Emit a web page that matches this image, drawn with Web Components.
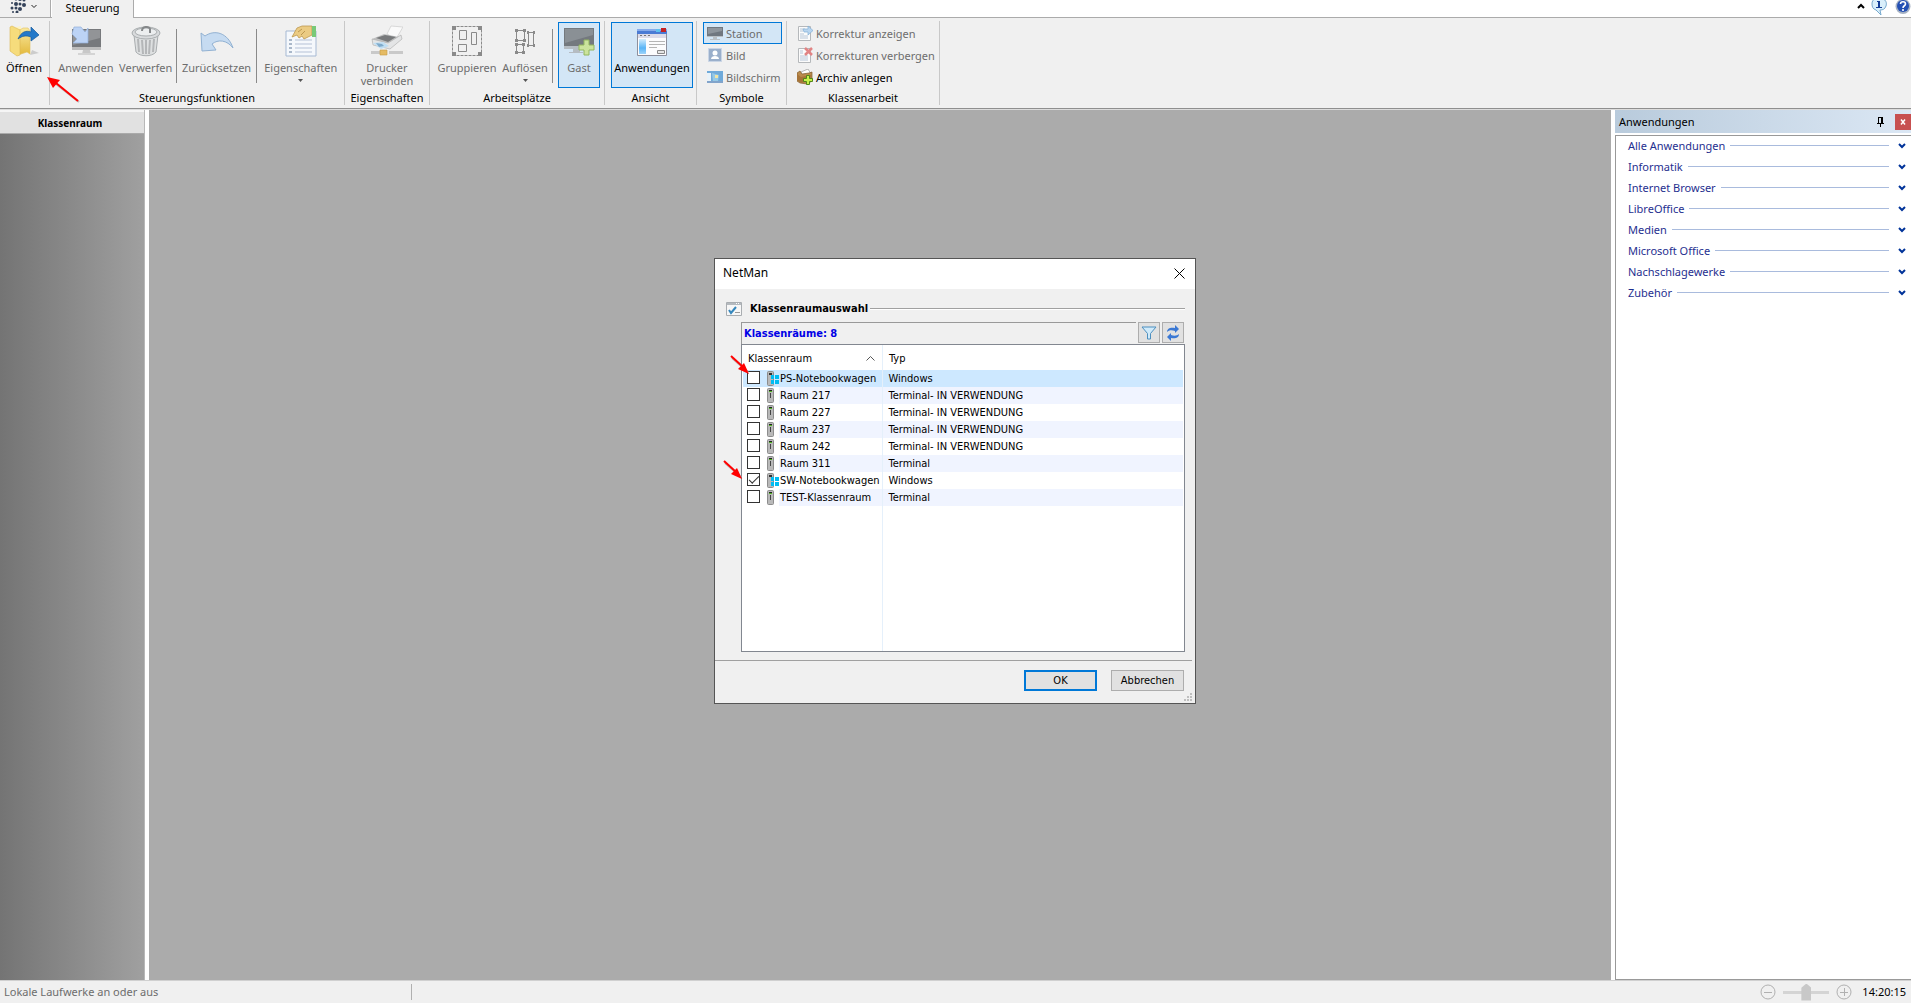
<!DOCTYPE html>
<html lang="de">
<head>
<meta charset="utf-8">
<title>NetMan</title>
<style>
html, body { height: 100%; }
body {
    margin: 0;
    overflow: hidden;
    font: 11px/16px "Noto Sans", "Open Sans", sans-serif;
    color: #000;
    background: #fff;
}
</style>
</head>
<body>
<netman-app></netman-app>

<script>
const icons = {
    grid: `<svg width="16" height="16" viewBox="0 0 16 16" fill="#34435a"><circle cx="6" cy="2" r="1.5"/><circle cx="10" cy="2" r="2"/><circle cx="14" cy="3" r="1.5"/><circle cx="2" cy="6" r="1"/><circle cx="6" cy="7" r="2"/><circle cx="10" cy="7" r="1.5"/><circle cx="14" cy="8" r="2"/><circle cx="2" cy="11" r="1.5"/><circle cx="6" cy="11" r="1.5"/><circle cx="10" cy="12" r="2"/><circle cx="3" cy="15" r="1"/><circle cx="7" cy="15" r="1.5"/></svg>`,
    open: `<svg width="32" height="32" viewBox="0 0 32 32"><defs><linearGradient id="f" x2="0" y2="1"><stop stop-color="#f9e9a0"/><stop offset="1" stop-color="#e3b93c"/></linearGradient></defs><path d="M22 30l9-2-7-3z" fill="#ccc"/><path d="M8 2l5-1v27l-5 1z" fill="#fdf3c4"/><path d="M10 6l5-3h5l2 3v23l-3-2-9 3z" fill="url(#f)" stroke="#e0bf5c" stroke-width=".6"/><path d="M2 2l2-1 8 4v25l-3 1-7-5z" fill="#f6dc7c" stroke="#dcb751" stroke-width=".6"/><path d="M10 14c3-7 8-9 13-7V2l8 8-8 6v-4c-5-2-9-1-13 2z" fill="#2479c9" stroke="#165a9b" stroke-width=".7"/></svg>`,
    apply: `<svg width="32" height="32" viewBox="0 0 32 32"><path d="M2 4h29v20H2z" fill="#77797c"/><path d="M3 5h27v8L3 20z" fill="#929497"/><path d="M2 22h29v3H2z" fill="#bcbcbc"/><path d="M13 25h7l1 4H12z" fill="#c8c8c8"/><path d="M8 28h17v2H8z" fill="#d4d4d4"/><path d="M4 2h7l4 5 3-4v15H3l4-4-5-5z" fill="#bcd3f5" stroke="#94b0da" stroke-width=".7"/></svg>`,
    trash: `<svg width="32" height="32" viewBox="0 0 32 32" stroke="#a9adaf"><path d="M4 10l2 17c4 5 16 5 20 0l2-17z" fill="#dee0e1"/><path d="M8 14l1 13M12 15l1 14M16 15v14M20 15l-1 14M24 14l-1 13" stroke="#b4b6b8" stroke-width="2"/><ellipse cx="16" cy="8" rx="14" ry="6" fill="#d9dbdd"/><ellipse cx="16" cy="7" rx="11" ry="4" fill="#eceeef"/><path d="M12 6c0-5 7-5 8-2v4" fill="none" stroke="#85888a" stroke-width="2"/></svg>`,
    undo: `<svg width="34" height="32" viewBox="0 0 34 32"><path d="M1 8l4 3c10-7 23-3 28 12-6-8-15-9-21-4l4 6-14 1z" fill="#c6dbf1" stroke="#91b1d2"/></svg>`,
    props: `<svg width="32" height="32" viewBox="0 0 32 32"><path d="M1 6h30v25H1z" fill="#f5f8fc" stroke="#a6b9d3"/><path d="M4 15h3M4 19h3M4 23h3M4 27h3" stroke="#5f7898"/><path d="M10 15h17M10 19h17M10 23h17M10 27h17" stroke="#b5c1d6"/><path d="M7 12l5-9 5-2h10v9l-8 4-2-3-3 2-2-3z" fill="#ebcb83" stroke="#bd9850" stroke-width=".8"/><path d="M13 7l4-3M16 10l4-4" stroke="#bd9850"/><path d="M27 1h4v11h-4z" fill="#78c979"/></svg>`,
    printer: `<svg width="32" height="32" viewBox="0 0 32 32"><path d="M16 9l4-8 12 1-7 12z" fill="#fafafa" stroke="#ccc" stroke-width=".7"/><path d="M1 14l12-5 15 3-10 8-16-3z" fill="#bfc0c1"/><path d="M5 13l9-3 11 2-8 5z" fill="#77797b"/><path d="M1 14l16 4 13-8 1 4-12 10-17-4z" fill="#e4e5e6" stroke="#aaa" stroke-width=".6"/><path d="M2 18l10-1 6 4-8 3z" fill="#bfdef3"/><path d="M5 18l6 1 2 2-5 1z" fill="#7faaca"/><path d="M0 26h9v3H0zM18 26h14v3H18z" fill="#c9c9c9"/><path d="M9 25h7v5H9z" fill="#e5bb64" stroke="#c79b45" stroke-width=".6"/></svg>`,
    group: `<svg width="32" height="32" viewBox="0 0 32 32" fill="none" stroke="#8a8a8a"><path d="M1.500 1.500h29v29h-29z" stroke-dasharray="3 1"/><path d="M8.500 5.500h7v9h-7zM20.500 7.500h5v12h-5zM7.500 19.500h8v7h-8z"/><path d="M1 1h4v4H1zM27 1h4v4h-4zM1 27h4v4H1zM27 27h4v4h-4z" fill="#8a8a8a" stroke="none"/></svg>`,
    ungroup: `<svg width="24" height="32" viewBox="0 0 24 32" fill="none" stroke="#8a8a8a"><path d="M3.500 5.500h8v10h-8zM15.500 7.500h5v13h-5zM3.500 19.500h7v8h-7z"/><g fill="#8a8a8a" stroke="none"><path d="M2 4h3v3H2zM10 4h3v3h-3zM2 14h3v3H2zM10 14h3v3h-3zM14 6h2v3h-2zM20 6h2v3h-2zM14 19h2v3h-2zM20 19h2v3h-2zM2 18h3v3H2zM9 18h3v3H9zM2 26h3v3H2zM9 26h3v3H9z"/></g></svg>`,
    guest: `<svg width="32" height="32" viewBox="0 0 32 32"><path d="M1 3h30v20H1z" fill="#74797e"/><path d="M2 4h28v6L2 18z" fill="#8a9095"/><path d="M1 21h30v3H1z" fill="#b5bcc2"/><path d="M10 24h7v4h-7zM6 27h14v1H6z" fill="#b5bcc2"/><path d="M21 15h5v5h5v5h-5v5h-5v-5h-5v-5h5z" fill="#cbe39c" stroke="#92b65f"/></svg>`,
    apps: `<svg width="32" height="32" viewBox="0 0 32 32"><defs><linearGradient id="p" x2="0" y2="1"><stop stop-color="#d3ecfc"/><stop offset=".6" stop-color="#58b4f6"/><stop offset="1" stop-color="#9ed4fa"/></linearGradient></defs><path d="M1.500 4.500h29v26h-29z" fill="#fcfcfd" stroke="#8d8f9c"/><path d="M1 4h30v5H1z" fill="#4b7bd4"/><path d="M1 4h30v2H1z" fill="#86abeb"/><path d="M20 4h4v3h-4z" fill="#5fc0ed"/><path d="M25 3h5v4h-5z" fill="#c42222"/><path d="M2 9h28v4H2z" fill="#dcdbe9"/><path d="M4 10h2v1H4zM8 10h2v1H8zM12 10h2v1h-2z" fill="#777"/><path d="M3 14h7v15H3z" fill="url(#p)"/><path d="M13 16.500h16M13 19.500h16M13 22.500h8" stroke="#b5b5b5"/><path d="M21.500 25.500h7v3h-7z" fill="#e5e5e5" stroke="#888"/></svg>`,
    station: `<svg width="16" height="16" viewBox="0 0 16 16"><path d="M0 2h16v10H0z" fill="#70777f"/><path d="M1 3h14v3L1 9z" fill="#8e959c"/><path d="M0 11h16v1H0zM6 12h4v2H6zM3 14h10v1H3z" fill="#bac0c5"/></svg>`,
    image: `<svg width="16" height="16" viewBox="0 0 16 16"><path d="M1.500 1.500h13v13h-13z" fill="#9aafcb" stroke="#c9d5e5"/><circle cx="8" cy="6" r="2.500" fill="#fff"/><path d="M4 12c0-4 8-4 8 0z" fill="#fff"/></svg>`,
    screen: `<svg width="16" height="16" viewBox="0 0 16 16"><path d="M0 2h16v12H0z" fill="#6faada"/><path d="M0 4h4v8H0z" fill="#e8f2f9"/><path d="M5 4l7 2-1 6-5 1z" fill="#96cae6"/><path d="M8 6h3v3H8z" fill="#f0e5a5"/><path d="M0 12h16v2H0z" fill="#82a4cb"/></svg>`,
    corrShow: `<svg width="16" height="16" viewBox="0 0 16 16"><path d="M1.500 1.500h12v14h-12z" fill="#fbfbfb" stroke="#b5b8bb"/><path d="M3 4h5M3 6h3M3 11h8M3 13h8M3 9h4" stroke="#b7c6d7"/><path d="M6 4h5V1l5 4.500L11 10V7H7z" fill="#b8d5ef" stroke="#82afd7" stroke-width=".7"/></svg>`,
    corrHide: `<svg width="16" height="16" viewBox="0 0 16 16"><path d="M1.500 1.500h12v14h-12z" fill="#fbfbfb" stroke="#b5b8bb"/><path d="M3 4h3M3 6h3M3 9h8M3 11h8M3 13h8" stroke="#b7c6d7"/><path d="M8 1l7 7M15 1L8 8" stroke="#e18484" stroke-width="2.500"/></svg>`,
    archive: `<svg width="16" height="16" viewBox="0 0 16 16"><path d="M4 3l7-3 3 5-9 4z" fill="#fff" stroke="#999" stroke-width=".7"/><path d="M0 4l3-2 2 3 7-1 3-1v9l-5 3-7-1-3-2z" fill="#b98a4d" stroke="#7f5b2d" stroke-width=".7"/><path d="M0 5l4 3 10-2-1 6-9 2-4-3z" fill="#a67439"/><path d="M9.500 6.500h3v3h3v3h-3v3h-3v-3h-3v-3h3z" fill="#c6f04b" stroke="#518719"/></svg>`,
    info: `<svg width="16" height="16" viewBox="0 0 16 16"><path d="M4 0h8c3 1 4 4 3 7-1 3-3 4-6 4l1 5-5-5C2 10 1 8 1 5c0-3 1-4 3-5z" fill="#d9effb" stroke="#77a9cd"/><path d="M6 2h3v6h2v1H5V8h2V3H6z" fill="#123c96"/></svg>`,
    help: `<svg width="16" height="16" viewBox="0 0 16 16"><circle cx="8" cy="7.500" r="7.500" fill="#a5b1c3"/><circle cx="8" cy="7" r="6" fill="#2450b4"/><path d="M5.500 5c0-3 5-3 5 0 0 2-2.500 1.500-2.500 4M8 10v2" fill="none" stroke="#fff" stroke-width="1.600"/></svg>`,
    caretUp: `<svg width="8" height="6" viewBox="0 0 8 6"><path d="M1 5l3-3 3 3" fill="none" stroke="#000" stroke-width="2"/></svg>`,
    caretDown: `<svg width="6" height="5" viewBox="0 0 6 5"><path d="M.5 1l2.500 2.500L5.500 1" fill="none" stroke="#222"/></svg>`,
    drop: `<svg width="5" height="3" viewBox="0 0 5 3"><path d="M0 0h5L2.500 3z" fill="#555"/></svg>`,
    chevron: `<svg width="8" height="6" viewBox="0 0 8 6"><path d="M1 1l3 3 3-3" fill="none" stroke="#003399" stroke-width="2"/></svg>`,
    pin: `<svg width="8" height="10" viewBox="0 0 8 10" fill="none" stroke="#000"><path d="M1 .5h5M1.500 0v6M5.500 0v6M4.500 0v6M0 6.500h7M3.500 7v3"/></svg>`,
    x: `<svg width="6" height="6" viewBox="0 0 6 6"><path d="M1 .5l4 5M5 .5l-4 5" stroke="#fff" stroke-width="1.500"/></svg>`,
    close: `<svg width="11" height="11" viewBox="0 0 11 11"><path d="M.5.5l10 10M10.500.5l-10 10" stroke="#000"/></svg>`,
    task: `<svg width="16" height="14" viewBox="0 0 16 14"><path d="M.5.5h15v13H.5z" fill="#f7f7f7" stroke="#a9adb1"/><path d="M1 1h14v2H1z" fill="#b5babf"/><path d="M10 1h1v1h-1zM12 1h1v1h-1z" fill="#fff"/><path d="M3 8l2 3 5-6" fill="none" stroke="#3788bd" stroke-width="2"/><path d="M9 10.500h5" stroke="#999"/></svg>`,
    filter: `<svg width="16" height="14" viewBox="0 0 16 14"><path d="M1 1h14L9.500 7.500V13h-3V7.500z" fill="#d0eafa" stroke="#4c8fbf"/></svg>`,
    refresh: `<svg width="14" height="16" viewBox="0 0 14 16"><path d="M1 7c0-4 4-5 8-4V0l4 4-4 4V6C6 5 3 5 1 7zM13 9c0 4-4 5-8 4v3l-4-4 4-4v2c3 1 6 1 8-1z" fill="#3a78d4"/></svg>`,
    sort: `<svg width="9" height="5" viewBox="0 0 9 5"><path d="M.5 4.500l4-4 4 4" fill="none" stroke="#555"/></svg>`,
    terminal: `<svg width="7" height="15" viewBox="0 0 7 15"><rect x=".5" y=".5" width="6" height="14" rx="1" fill="#b9b9b9" stroke="#8d8d8d"/><path d="M2 2h3v1H2z" fill="#222"/><path d="M2 3h3v1H2z" fill="#4eb41e"/><path d="M3 5h1v5H3z" fill="#444"/></svg>`,
    windows: `<svg width="12" height="15" viewBox="0 0 12 15"><rect x=".5" y=".5" width="6" height="14" rx="1" fill="#b9b9b9" stroke="#8d8d8d"/><path d="M2 2h3v2H2z" fill="#333"/><path d="M4 4h3v4H4zM8 4h4v4H8zM4 9h3v4H4zM8 9h4v4H8z" fill="#00bcf2"/></svg>`,
    arrow: `<svg width="34" height="27" viewBox="0 0 34 27"><path d="M9 7l23 18" stroke="#bbb" stroke-width="2"/><path d="M9 6l22 18" stroke="#f00" stroke-width="2"/><path d="M0 0l13 3-7 8z" fill="#f00"/></svg>`,
    arrowSmall: `<svg width="24" height="22" viewBox="0 0 24 22"><path d="M2 3l16 14" stroke="#bbb" stroke-width="2"/><path d="M1 1l12 11" stroke="#f00" stroke-width="2"/><path d="M19 19L8 14l6-6z" fill="#f00"/></svg>`,
    grip: `<svg width="8" height="8" viewBox="0 0 8 8" fill="#bfbfbf"><path d="M6 0h2v2H6zM3 3h2v2H3zM6 3h2v2H6zM0 6h2v2H0zM3 6h2v2H3zM6 6h2v2H6z"/></svg>`,
    minus: `<svg width="16" height="16" viewBox="0 0 16 16" fill="none" stroke="#b0b0b0"><circle cx="8" cy="8" r="7"/><path d="M4 8.500h8"/></svg>`,
    plus: `<svg width="16" height="16" viewBox="0 0 16 16" fill="none" stroke="#b0b0b0"><circle cx="8" cy="8" r="7"/><path d="M4 8.500h8M8.500 4v8"/></svg>`
};

const base = `
    * { box-sizing: border-box; }
    svg { display: block; flex: none; }
    button { font: inherit; color: inherit; background: none; border: 0; padding: 0; margin: 0; }
`;

class NetElement extends HTMLElement {
    constructor() {
        super();
        this.shadowDOM = this.attachShadow({mode: "open"});
    }

    connectedCallback() {
        this.render();
    }
}

class RibbonButton extends NetElement {
    render() {
        const drop = this.hasAttribute("drop") ? icons.drop : "";
        this.shadowDOM.innerHTML = `
        <style>
            ${base}
            :host { display: block; }
            button {
                display: flex;
                flex-direction: column;
                align-items: center;
                width: 100%;
                height: 66px;
                border: 1px solid transparent;
                white-space: nowrap;
                line-height: 13px;
            }
            .icon { height: 32px; margin: 2px 0 4px; }
            .text { text-align: center; }
            .text + svg { margin-top: 5px; }
            :host([muted]) button { color: #6d6d6d; }
            :host([active]) button { background: #d3e6f6; border-color: #0078d7; }
            :host([small]) button {
                flex-direction: row;
                height: 22px;
                padding: 0 3px;
                gap: 3px;
            }
            :host([small]) .icon { height: 16px; width: 16px; margin: 0; }
        </style>
        <button type="button"><span class="icon">${icons[this.getAttribute("icon")]}</span><span class="text"><slot></slot></span>${drop}</button>
        `;
    }
}
customElements.define("ribbon-button", RibbonButton);

class RibbonGroup extends NetElement {
    render() {
        this.shadowDOM.innerHTML = `
        <style>
            ${base}
            :host {
                display: flex;
                flex-direction: column;
                flex: none;
                height: 84px;
                margin-top: 3px;
                border-right: 1px solid #c8c8c8;
            }
            .items { display: flex; height: 67px; padding: 1px 3px 0; }
            :host([stack]) .items { flex-direction: column; padding: 1px 4px 0 6px; }
            .title { text-align: center; line-height: 20px; }
            ::slotted(hr) {
                width: 1px;
                height: 54px;
                margin: 7px 3px 0;
                border: 0;
                background: #8a8a8a;
            }
        </style>
        <div class="items"><slot></slot></div>
        <div class="title">${this.getAttribute("label") || ""}</div>
        `;
    }
}
customElements.define("ribbon-group", RibbonGroup);

class RibbonBar extends NetElement {
    render() {
        this.shadowDOM.innerHTML = `
        <style>
            ${base}
            :host { display: block; flex: none; position: relative; }
            .tabs { display: flex; height: 18px; border-bottom: 1px solid #ababab; }
            .menu {
                display: flex;
                align-items: flex-start;
                gap: 5px;
                width: 51px;
                padding: 0 0 0 10px;
                border-right: 1px solid #ababab;
                background: #f0f0f0;
                overflow: hidden;
            }
            .menu svg:first-child { margin-top: -3px; }
            .menu svg + svg { margin-top: 4px; }
            .tab {
                width: 82px;
                height: 18px;
                margin-left: 1px;
                line-height: 15px;
                background: #f0f0f0;
                border-right: 1px solid #ababab;
                padding-bottom: 3px;
            }
            .tools { display: flex; margin-left: auto; overflow: hidden; }
            .tools button { margin-top: -3px; }
            .tools button:first-child { margin: 3px 6px 0 0; align-self: flex-start; }
            .tools button + button + button { margin-left: 8px; }
            .groups { display: flex; height: 91px; background: #f0f0f0; border-bottom: 1px solid #8f8f8f; }
            .hint { position: absolute; left: 47px; top: 77px; }
            ribbon-group { width: var(--w); }
            ribbon-button { width: var(--w); }
            ribbon-group[stack] ribbon-button { width: auto; }
        </style>
        <div class="tabs">
            <button class="menu" type="button" aria-label="Menü">${icons.grid}${icons.caretDown}</button>
            <button class="tab" type="button">Steuerung</button>
            <div class="tools">
                <button type="button" aria-label="Minimieren">${icons.caretUp}</button>
                <button type="button" aria-label="Info">${icons.info}</button>
                <button type="button" aria-label="Hilfe">${icons.help}</button>
            </div>
        </div>
        <div class="groups">
            <ribbon-group style="--w: 50px">
                <ribbon-button icon="open" style="--w: 42px">Öffnen</ribbon-button>
            </ribbon-group>
            <ribbon-group label="Steuerungsfunktionen" style="--w: 295px">
                <ribbon-button muted icon="apply" style="--w: 66px">Anwenden</ribbon-button>
                <ribbon-button muted icon="trash" style="--w: 54px">Verwerfen</ribbon-button>
                <hr>
                <ribbon-button muted icon="undo" style="--w: 74px">Zurücksetzen</ribbon-button>
                <hr>
                <ribbon-button muted drop icon="props" style="--w: 81px">Eigenschaften</ribbon-button>
            </ribbon-group>
            <ribbon-group label="Eigenschaften" style="--w: 85px">
                <ribbon-button muted icon="printer" style="--w: 78px">Drucker<br>verbinden</ribbon-button>
            </ribbon-group>
            <ribbon-group label="Arbeitsplätze" style="--w: 175px">
                <ribbon-button muted icon="group" style="--w: 68px">Gruppieren</ribbon-button>
                <ribbon-button muted drop icon="ungroup" style="--w: 48px">Auflösen</ribbon-button>
                <hr>
                <ribbon-button muted active icon="guest" style="--w: 42px; margin-left: 2px">Gast</ribbon-button>
            </ribbon-group>
            <ribbon-group label="Ansicht" style="--w: 92px">
                <ribbon-button active icon="apps" style="--w: 82px; margin-left: 3px">Anwendungen</ribbon-button>
            </ribbon-group>
            <ribbon-group stack label="Symbole" style="--w: 90px">
                <ribbon-button small muted active icon="station">Station</ribbon-button>
                <ribbon-button small muted icon="image">Bild</ribbon-button>
                <ribbon-button small muted icon="screen">Bildschirm</ribbon-button>
            </ribbon-group>
            <ribbon-group stack label="Klassenarbeit" style="--w: 153px">
                <ribbon-button small muted icon="corrShow">Korrektur anzeigen</ribbon-button>
                <ribbon-button small muted icon="corrHide">Korrekturen verbergen</ribbon-button>
                <ribbon-button small icon="archive">Archiv anlegen</ribbon-button>
            </ribbon-group>
        </div>
        <div class="hint">${icons.arrow}</div>
        `;
    }
}
customElements.define("ribbon-bar", RibbonBar);

class RoomPanel extends NetElement {
    render() {
        this.shadowDOM.innerHTML = `
        <style>
            ${base}
            :host {
                display: flex;
                flex-direction: column;
                width: 145px;
                border-right: 1px solid #b8b8b8;
            }
            header {
                height: 24px;
                padding-right: 4px;
                border-top: 2px solid #f5f5f5;
                border-bottom: 1px solid #aaa;
                background: #e1e1e1;
                text-align: center;
                font-weight: bold;
                font-size: 10px;
                line-height: 22px;
            }
            .body { flex: 1; background: linear-gradient(90deg, #747474, #a0a0a0); }
        </style>
        <header>Klassenraum</header>
        <div class="body"></div>
        `;
    }
}
customElements.define("room-panel", RoomPanel);

class AppCategory extends NetElement {
    render() {
        this.shadowDOM.innerHTML = `
        <style>
            ${base}
            :host { display: block; }
            button {
                display: flex;
                align-items: center;
                width: 100%;
                height: 21px;
                padding: 0 5px 2px 12px;
                color: #1f2f8f;
            }
            i { flex: 1; height: 1px; margin: 0 9px 0 5px; background: #a9bbdd; }
        </style>
        <button type="button"><slot></slot><i></i>${icons.chevron}</button>
        `;
    }
}
customElements.define("app-category", AppCategory);

class AppPanel extends NetElement {
    set categories(items) {
        this._items = items;
    }

    render() {
        this.shadowDOM.innerHTML = `
        <style>
            ${base}
            :host { display: flex; flex-direction: column; width: 296px; }
            header {
                display: flex;
                align-items: center;
                height: 23px;
                padding-left: 4px;
                background: linear-gradient(90deg, #b9cbdc, #dbe7f4);
            }
            header span { flex: 1; }
            .close {
                display: grid;
                place-items: center;
                width: 16px;
                height: 16px;
                margin-left: 10px;
                background: #c75050;
            }
            .list {
                flex: 1;
                margin-top: 2px;
                border: 1px solid #999;
                border-right: 0;
            }
        </style>
        <header>
            <span>Anwendungen</span>
            <button type="button" aria-label="Anheften">${icons.pin}</button>
            <button class="close" type="button" aria-label="Schließen">${icons.x}</button>
        </header>
        <div class="list"></div>
        `;
        const list = this.shadowDOM.querySelector(".list");
        this._items.forEach(item => {
            const category = document.createElement("app-category");
            category.textContent = item;
            list.appendChild(category);
        });
    }
}
customElements.define("app-panel", AppPanel);

class StatusBar extends NetElement {
    render() {
        this.shadowDOM.innerHTML = `
        <style>
            ${base}
            :host {
                display: flex;
                align-items: center;
                flex: none;
                height: 23px;
                padding: 0 5px 0 4px;
                border-top: 1px solid #d0d0d0;
                background: #f0f0f0;
            }
            .text { width: 408px; line-height: 16px; color: #6d6d6d; border-right: 1px solid #b0b0b0; }
            .zoom { display: flex; align-items: center; gap: 7px; margin-left: auto; }
            input {
                appearance: none;
                width: 46px;
                height: 18px;
                margin: 0;
                background: linear-gradient(#d4d4d4, #d4d4d4) center / 100% 3px no-repeat;
            }
            input::-webkit-slider-thumb {
                appearance: none;
                width: 10px;
                height: 17px;
                background: #c8c8c8;
                clip-path: polygon(50% 0, 100% 25%, 100% 100%, 0 100%, 0 25%);
            }
            time { margin-left: 10px; }
        </style>
        <span class="text">Lokale Laufwerke an oder aus</span>
        <div class="zoom">
            <button type="button" aria-label="Verkleinern">${icons.minus}</button>
            <input type="range" aria-label="Zoom">
            <button type="button" aria-label="Vergrößern">${icons.plus}</button>
        </div>
        <time>14:20:15</time>
        `;
    }
}
customElements.define("status-bar", StatusBar);

class RoomTable extends NetElement {
    set rooms(items) {
        this._items = items;
    }

    render() {
        const rows = this._items.map((room, i) => `
            <tr class="${room.selected ? "selected" : ""}">
                <td><div class="cell">
                    <input type="checkbox" id="room${i}" ${room.checked ? "checked" : ""}>
                    <label for="room${i}"><span class="icon">${icons[room.type === "Windows" ? "windows" : "terminal"]}</span><span class="name">${room.name}</span></label>
                </div></td>
                <td class="type">${room.type}</td>
            </tr>`).join("");
        this.shadowDOM.innerHTML = `
        <style>
            ${base}
            :host {
                display: block;
                box-sizing: border-box;
                height: 308px;
                padding: 0 1px;
                border: 1px solid #828790;
                background: linear-gradient(#e5f0fb, #e5f0fb) 140px 0 / 1px 100% no-repeat #fff;
            }
            table { width: 100%; border-collapse: collapse; table-layout: fixed; }
            th { width: 139px; height: 25px; padding: 2px 5px 0; font-weight: normal; text-align: left; }
            th:last-child { width: auto; padding-left: 7px; }
            th div { display: flex; align-items: center; justify-content: space-between; padding-right: 2px; }
            td { height: 17px; padding: 0; line-height: 16px; white-space: nowrap; }
            .cell { display: flex; align-items: center; height: 17px; }
            input {
                appearance: none;
                width: 13px;
                height: 13px;
                margin: 0 7px 2px 4px;
                border: 1px solid #333;
                background: #fff;
            }
            input:checked::before {
                content: "";
                display: block;
                width: 9px;
                height: 4px;
                margin: 2px 1px;
                border: solid #333;
                border-width: 0 0 1px 1px;
                transform: rotate(-45deg);
            }
            label { display: flex; align-items: center; flex: 1; }
            .icon { width: 12px; }
            .name { flex: 1; padding: 1px 0 0 1px; }
            .type { padding: 1px 0 0 6px; border-left: 1px solid #e5f0fb; }
            tr:nth-child(even) .name, tr:nth-child(even) .type {
                background: #f0f4ff;
            }
            tr.selected td { background: #cde8ff; }
        </style>
        <table>
            <thead>
                <tr><th><div>Klassenraum ${icons.sort}</div></th><th>Typ</th></tr>
            </thead>
            <tbody>${rows}</tbody>
        </table>
        `;
    }
}
customElements.define("room-table", RoomTable);

class RoomDialog extends NetElement {
    render() {
        this.shadowDOM.innerHTML = `
        <style>
            ${base}
            :host {
                display: block;
                box-sizing: border-box;
                position: absolute;
                top: 258px;
                left: 0;
                right: 1px;
                width: 482px;
                margin: 0 auto;
                border: 1px solid #555;
                background: #f0f0f0;
                font: 11px/16px "DejaVu Sans Condensed", "DejaVu Sans", sans-serif;
            }
            header {
                display: flex;
                align-items: center;
                justify-content: space-between;
                height: 30px;
                padding: 0 10px 2px 8px;
                background: #fff;
                font: 12px/16px "Noto Sans", "Open Sans", sans-serif;
            }
            h2 {
                display: flex;
                align-items: center;
                gap: 8px;
                height: 16px;
                margin: 12px 10px 5px 11px;
                font-size: 11px;
            }
            h2 i { flex: 1; height: 2px; margin-left: -6px; background: #a0a0a0; border-bottom: 1px solid #fff; }
            .content { margin: 0 10px 0 26px; }
            .bar { display: flex; gap: 2px; height: 22px; padding-right: 1px; }
            .count {
                flex: 1;
                padding-left: 2px;
                border: 1px solid #999;
                border-width: 1px 0 0 1px;
                color: #0000e6;
                font-weight: bold;
                line-height: 22px;
            }
            .bar button {
                display: grid;
                place-items: center;
                width: 22px;
                height: 21px;
                border: 1px solid #adadad;
                background: #e1e1e1;
            }
            footer {
                display: flex;
                justify-content: flex-end;
                gap: 14px;
                height: 43px;
                margin: 8px 3px 0 0;
                padding: 9px 8px 0 0;
                border-top: 1px solid #a0a0a0;
            }
            footer button {
                width: 73px;
                height: 21px;
                border: 1px solid #adadad;
                background: #e1e1e1;
            }
            footer .default { border: 2px solid #0078d7; }
            .hint, .grip { position: absolute; }
            .first { left: 15px; top: 96px; }
            .second { left: 8px; top: 201px; }
            .grip { right: 3px; bottom: 2px; }
        </style>
        <header>NetMan <button type="button" aria-label="Schließen">${icons.close}</button></header>
        <h2>${icons.task}Klassenraumauswahl<i></i></h2>
        <div class="content">
            <div class="bar">
                <div class="count">Klassenräume: 8</div>
                <button type="button" aria-label="Filter">${icons.filter}</button>
                <button type="button" aria-label="Aktualisieren">${icons.refresh}</button>
            </div>
            <slot></slot>
        </div>
        <footer>
            <button class="default" type="button">OK</button>
            <button type="button">Abbrechen</button>
        </footer>
        <div class="hint first">${icons.arrowSmall}</div>
        <div class="hint second">${icons.arrowSmall}</div>
        <div class="grip">${icons.grip}</div>
        `;
    }
}
customElements.define("room-dialog", RoomDialog);

class NetmanApp extends NetElement {
    render() {
        this.shadowDOM.innerHTML = `
        <style>
            ${base}
            :host { display: flex; flex-direction: column; height: 100vh; }
            main { display: flex; flex: 1; min-height: 0; border-top: 1px solid #dcdcdc; }
            .desk { flex: 1; margin: 0 4px; background: #ababab; }
        </style>
        <ribbon-bar></ribbon-bar>
        <main>
            <room-panel></room-panel>
            <div class="desk"></div>
        </main>
        <status-bar></status-bar>
        <room-dialog></room-dialog>
        `;
        const panel = document.createElement("app-panel");
        panel.categories = ["Alle Anwendungen", "Informatik", "Internet Browser", "LibreOffice",
            "Medien", "Microsoft Office", "Nachschlagewerke", "Zubehör"];
        this.shadowDOM.querySelector("main").appendChild(panel);

        const table = document.createElement("room-table");
        table.rooms = [
            {name: "PS-Notebookwagen", type: "Windows", selected: true},
            {name: "Raum 217", type: "Terminal- IN VERWENDUNG"},
            {name: "Raum 227", type: "Terminal- IN VERWENDUNG"},
            {name: "Raum 237", type: "Terminal- IN VERWENDUNG"},
            {name: "Raum 242", type: "Terminal- IN VERWENDUNG"},
            {name: "Raum 311", type: "Terminal"},
            {name: "SW-Notebookwagen", type: "Windows", checked: true},
            {name: "TEST-Klassenraum", type: "Terminal"}
        ];
        this.shadowDOM.querySelector("room-dialog").appendChild(table);
    }
}
customElements.define("netman-app", NetmanApp);
</script>
</body>
</html>
